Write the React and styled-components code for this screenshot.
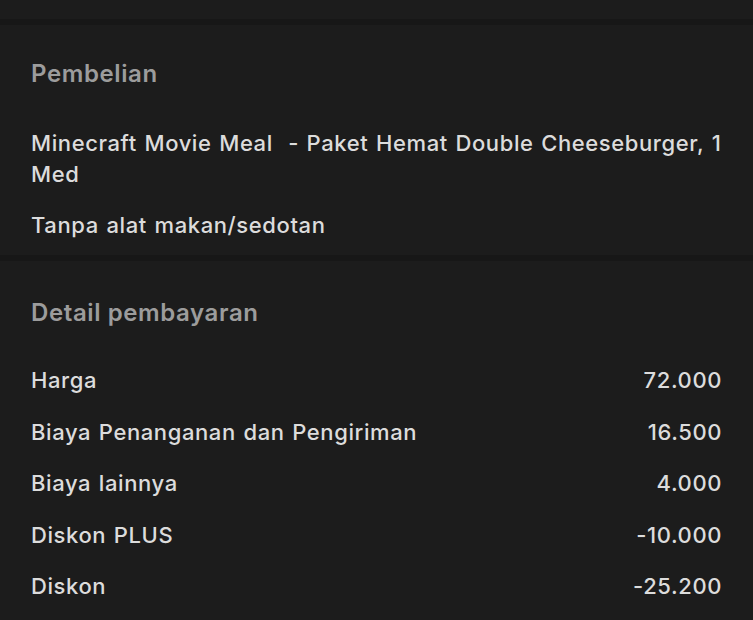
import React from "react";
import styled, { createGlobalStyle } from "styled-components";

const purchase = [
    "Minecraft Movie Meal  - Paket Hemat Double Cheeseburger, 1 Med",
    "Tanpa alat makan/sedotan",
];

const payment = [
    { label: "Harga", value: "72.000" },
    { label: "Biaya Penanganan dan Pengiriman", value: "16.500" },
    { label: "Biaya lainnya", value: "4.000" },
    { label: "Diskon PLUS", value: "-10.000" },
    { label: "Diskon", value: "-25.200" },
];

export default function App() {
    return (
        <Page>
            <GlobalStyle />
            <TopBar />
            <Divider />
            <Section $top={33} $bottom={14}>
                <Heading>Pembelian</Heading>
                <ItemList>
                    {purchase.map((item) => (
                        <Item key={item}>{item}</Item>
                    ))}
                </ItemList>
            </Section>
            <Divider />
            <Section $top={36} $bottom={20}>
                <Heading>Detail pembayaran</Heading>
                <Rows>
                    {payment.map((row) => (
                        <Row key={row.label}>
                            <span>{row.label}</span>
                            <Amount>{row.value}</Amount>
                        </Row>
                    ))}
                </Rows>
            </Section>
        </Page>
    );
}

const GlobalStyle = createGlobalStyle`
    html, body {
        margin: 0;
        background: #1c1c1c;
    }
`;

const Page = styled.div`
    width: 753px;
    height: 620px;
    overflow: hidden;
    background: #1c1c1c;
    font-family: Inter, "Noto Sans", sans-serif;
    color: #dcdcdc;
`;

const TopBar = styled.div`
    height: 19px;
`;

const Divider = styled.div`
    height: 6px;
    background: #171717;
`;

const Section = styled.section`
    padding: ${(p) => p.$top}px 31px ${(p) => p.$bottom}px 31px;
`;

const Heading = styled.h2`
    margin: 0;
    font-size: 24px;
    line-height: 32px;
    font-weight: 600;
    color: #9c9c9c;
    letter-spacing: 0.6px;
`;

const ItemList = styled.div`
    display: flex;
    flex-direction: column;
    gap: 20px;
    margin-top: 38px;
`;

const Item = styled.div`
    font-size: 22px;
    line-height: 31px;
    font-weight: 500;
    letter-spacing: 0.6px;
    word-spacing: 1.2px;
    white-space: pre-wrap;
`;

const Rows = styled.div`
    display: flex;
    flex-direction: column;
    gap: 20.5px;
    margin-top: 36px;
`;

const Row = styled.div`
    display: flex;
    justify-content: space-between;
    font-size: 22px;
    line-height: 31px;
    font-weight: 500;
    letter-spacing: 0.6px;
    word-spacing: 1.2px;
`;

const Amount = styled.span`
    text-align: right;
`;
